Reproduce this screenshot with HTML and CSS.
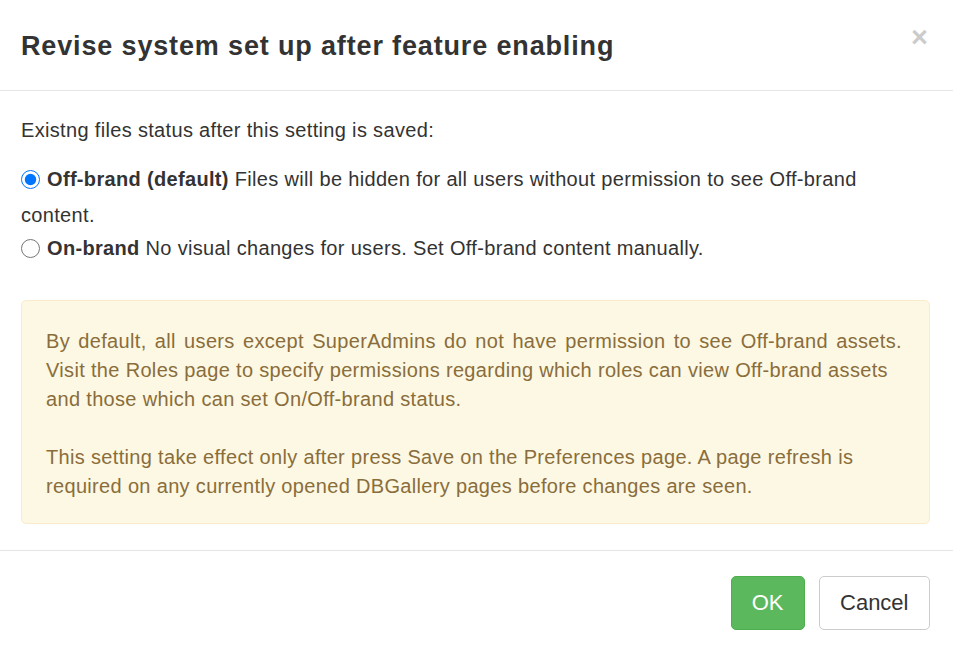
FILE: index.html
```html
<!DOCTYPE html>
<html lang="en">
<head>
<meta charset="utf-8">
<title>Revise system set up</title>
<link rel="stylesheet" href="styles.css">
</head>
<body>
<div class="modal">
  <div class="modal-header">
    <h4 class="modal-title">Revise system set up after feature enabling</h4>
    <button class="close" type="button" aria-label="Close">×</button>
  </div>
  <div class="modal-body">
    <p class="lead-text">Existng files status after this setting is saved:</p>
    <div class="radio">
      <label><input type="radio" name="brand" checked><b>Off-brand (default)</b> Files will be hidden for all users without permission to see Off-brand<br>content.</label>
    </div>
    <div class="radio radio-next">
      <label><input type="radio" name="brand"><b>On-brand</b> No visual changes for users. Set Off-brand content manually.</label>
    </div>
    <div class="alert">
      <span class="wide-line">By default, all users except SuperAdmins do not have permission to see Off-brand assets.</span><br>
      Visit the Roles page to specify permissions regarding which roles can view Off-brand assets<br>
      and those which can set On/Off-brand status.<br><br>
      This setting take effect only after press Save on the Preferences page. A page refresh is<br>
      required on any currently opened DBGallery pages before changes are seen.
    </div>
  </div>
  <div class="modal-footer">
    <button class="btn btn-success" type="button">OK</button>
    <button class="btn btn-default" type="button">Cancel</button>
  </div>
</div>
</body>
</html>
```

FILE: styles.css
```css
* { box-sizing: border-box; }
html, body {
  margin: 0;
  padding: 0;
  background: #fff;
}
body {
  font-family: "Liberation Sans", Arial, sans-serif;
  font-size: 20px;
  letter-spacing: 0.33px;
  color: #333;
  width: 953px;
  height: 653px;
  overflow: hidden;
}
.modal {
  display: flex;
  flex-direction: column;
  height: 653px;
  background: #fff;
}
.modal-header {
  position: relative;
  padding: 31px 23px 29px 21px;
  border-bottom: 1px solid #e5e5e5;
}
.modal-title {
  margin: 0;
  font-size: 27px;
  font-weight: bold;
  letter-spacing: 0.85px;
  line-height: 30px;
  color: #333;
}
.close {
  position: absolute;
  top: 23px;
  right: 25px;
  padding: 0;
  border: 0;
  background: transparent;
  font-family: "Liberation Sans", Arial, sans-serif;
  font-size: 29px;
  font-weight: bold;
  line-height: 1;
  color: #000;
  opacity: 0.2;
  text-shadow: 0 1px 0 #fff;
}
.modal-body {
  flex: 1;
  padding: 25px 23px 24px 21px;
}
.lead-text {
  margin: 0 0 16px;
  line-height: 29px;
}
.radio label {
  display: block;
  line-height: 36px;
  white-space: nowrap;
}
.radio-next {
  margin-top: -3px;
}
.radio input {
  width: 19px;
  height: 19px;
  margin: 0 7px 0 0;
  vertical-align: -3px;
  accent-color: #0075ff;
}
.radio b { font-weight: bold; }
.alert {
  margin-top: 34px;
  padding: 26px 24px 22px;
  background: #fcf8e3;
  border: 1px solid #faebcc;
  border-radius: 5px;
  color: #8a6d3b;
  line-height: 29px;
  white-space: nowrap;
}
.wide-line {
  word-spacing: 2.4px;
}
.modal-footer {
  display: flex;
  justify-content: flex-end;
  gap: 14px;
  padding: 25px 23px 23px;
  border-top: 1px solid #e5e5e5;
}
.btn {
  font-family: "Liberation Sans", Arial, sans-serif;
  font-size: 22px;
  letter-spacing: 0;
  line-height: 30px;
  padding: 11px 20px;
  border: 1px solid transparent;
  border-radius: 5px;
  cursor: pointer;
}
.btn-success {
  background: #5cb85c;
  border-color: #4cae4c;
  color: #fff;
}
.btn-default {
  background: #fff;
  border-color: #ccc;
  color: #333;
  padding: 11px 20.5px;
}
```
